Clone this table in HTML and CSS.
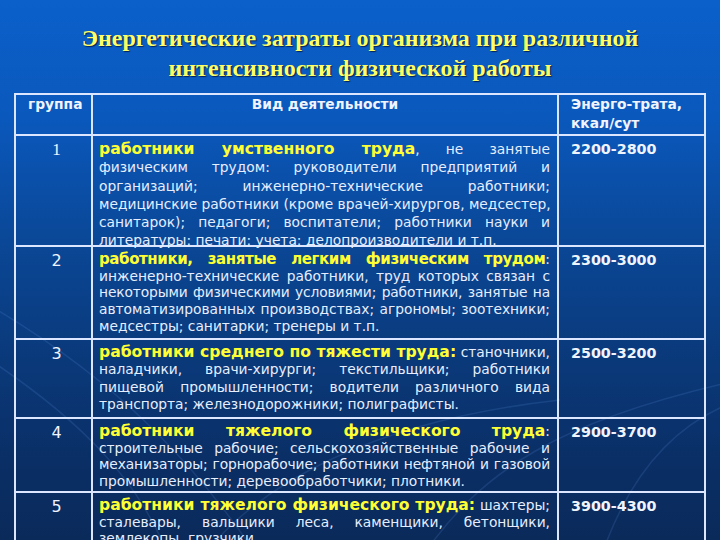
FILE: index.html
```html
<!DOCTYPE html>
<html lang="ru">
<head>
<meta charset="utf-8">
<link rel="stylesheet" href="styles.css">
</head>
<body>
<div class="slide">
  <svg class="swoosh" viewBox="0 0 720 540" preserveAspectRatio="none">
    <path d="M-20 300 C 120 380, 200 470, 260 560" />
    <path d="M-10 360 C 80 420, 140 480, 170 560" />
    <path d="M200 560 C 260 480, 380 420, 560 400" />
    <path d="M420 560 C 480 470, 560 420, 740 380" />
    <path d="M600 560 C 630 470, 680 420, 740 400" />
  </svg>
  <h1 class="title">Энергетические затраты организма при различной<br>интенсивности физической работы</h1>
  <table class="grid">
    <colgroup>
      <col class="c1"><col class="c2"><col class="c3">
    </colgroup>
    <tr class="head">
      <td class="hcell"><div class="hbox">группа</div></td>
      <td class="hcell center"><div class="hbox">Вид деятельности</div></td>
      <td class="hcell"><div class="hbox">Энерго-трата,<br>ккал/сут</div></td>
    </tr>
    <tr class="r1">
      <td class="num serif">1</td>
      <td class="desc"><div class="box">
        <span class="ln"><b>работники умственного труда</b>, не занятые</span>
        <span class="ln">физическим трудом: руководители предприятий и</span>
        <span class="ln">организаций; инженерно-технические работники;</span>
        <span class="ln">медицинские работники (кроме врачей-хирургов, медсестер,</span>
        <span class="ln">санитарок); педагоги; воспитатели; работники науки и</span>
        <span class="ln last">литературы; печати; учета; делопроизводители и т.п.</span>
      </div></td>
      <td class="val">2200-2800</td>
    </tr>
    <tr class="r2">
      <td class="num">2</td>
      <td class="desc"><div class="box">
        <span class="ln"><b class="fit">работники, занятые легким физическим трудом</b>:</span>
        <span class="ln">инженерно-технические работники, труд которых связан с</span>
        <span class="ln tight">некоторыми физическими условиями; работники, занятые на</span>
        <span class="ln">автоматизированных производствах; агрономы; зоотехники;</span>
        <span class="ln last">медсестры; санитарки; тренеры и т.п.</span>
      </div></td>
      <td class="val">2300-3000</td>
    </tr>
    <tr class="r3">
      <td class="num">3</td>
      <td class="desc"><div class="box">
        <span class="ln"><b>работники среднего по тяжести труда:</b> станочники,</span>
        <span class="ln">наладчики, врачи-хирурги; текстильщики; работники</span>
        <span class="ln">пищевой промышленности; водители различного вида</span>
        <span class="ln last">транспорта; железнодорожники; полиграфисты.</span>
      </div></td>
      <td class="val">2500-3200</td>
    </tr>
    <tr class="r4">
      <td class="num">4</td>
      <td class="desc"><div class="box">
        <span class="ln"><b>работники тяжелого физического труда</b>:</span>
        <span class="ln">строительные рабочие; сельскохозяйственные рабочие и</span>
        <span class="ln tight">механизаторы; горнорабочие; работники нефтяной и газовой</span>
        <span class="ln last">промышленности; деревообработчики; плотники.</span>
      </div></td>
      <td class="val">2900-3700</td>
    </tr>
    <tr class="r5">
      <td class="num">5</td>
      <td class="desc"><div class="box">
        <span class="ln"><b>работники тяжелого физического труда:</b> шахтеры;</span>
        <span class="ln">сталевары, вальщики леса, каменщики, бетонщики,</span>
        <span class="ln last">землекопы, грузчики.</span>
      </div></td>
      <td class="val">3900-4300</td>
    </tr>
  </table>
</div>
</body>
</html>
```

FILE: styles.css
```css
html, body {
  margin: 0;
  padding: 0;
}
body {
  width: 720px;
  height: 540px;
  overflow: hidden;
}
.slide {
  position: relative;
  width: 720px;
  height: 540px;
  overflow: hidden;
  background: linear-gradient(180deg, #0b60ca 0%, #0a58bc 22%, #0a4796 45%, #0a3a7c 65%, #0a2f66 85%, #0a2a5a 100%);
  font-family: "DejaVu Sans", Verdana, sans-serif;
  color: #e6eeff;
}
.swoosh {
  position: absolute;
  left: 0;
  top: 0;
  width: 720px;
  height: 540px;
  pointer-events: none;
}
.swoosh path {
  fill: none;
  stroke: rgba(120, 170, 255, 0.14);
  stroke-width: 1.5;
}
.title {
  position: relative;
  margin: 0;
  padding: 23px 0 0 0;
  height: 93px;
  box-sizing: border-box;
  text-align: center;
  font-family: "Liberation Serif", "Times New Roman", serif;
  font-weight: bold;
  font-size: 24px;
  line-height: 30px;
  color: #ffff66;
  text-shadow: 1px 1px 1px rgba(0, 20, 60, 0.8);
}
.grid {
  position: relative;
  margin-left: 14px;
  width: 690px;
  border-collapse: collapse;
  table-layout: fixed;
}
.c1 { width: 77px; }
.c2 { width: 466px; }
.c3 { width: 147px; }
.grid td {
  border: 2px solid #dce6ff;
  vertical-align: top;
  padding: 0;
}
.hcell {
  font-weight: bold;
  font-size: 13.8px;
  line-height: 19px;
  color: #f0f4ff;
}
.hcell .hbox {
  height: 39px;
  padding-left: 12px;
}
.hcell.center {
  text-align: center;
}
.hcell.center .hbox {
  padding-left: 0;
}
.num {
  text-align: center;
  font-size: 16px;
  line-height: 19px;
  padding-top: 4px !important;
  padding-left: 6px !important;
  color: #f0f4ff;
}
.num.serif {
  font-family: "Liberation Serif", "Times New Roman", serif;
  font-size: 17px;
}
.desc {
  padding: 4px 7px 0 6px !important;
  font-size: 13.8px;
  line-height: 16.7px;
}
.box {
  overflow: visible;
}
.r1 .box { height: 105px; line-height: 18.3px; }
.r2 .box { height: 87px; }
.r3 .box { height: 73px; line-height: 17.3px; }
.r4 .box { height: 68px; }
.r5 .box { height: 60px; }
.ln {
  display: block;
  white-space: nowrap;
  text-align: justify;
  text-align-last: justify;
}
.ln.last {
  text-align-last: left;
}
.ln.tight {
  letter-spacing: -0.12px;
}
.desc b {
  color: #ffff33;
  font-weight: bold;
  font-size: 15.6px;
}
.desc b.fit {
  font-size: 15px;
  letter-spacing: -0.4px;
}
.val {
  font-weight: bold;
  font-size: 14.3px;
  line-height: 18px;
  padding: 4px 0 0 12px !important;
  color: #f0f4ff;
}
```
